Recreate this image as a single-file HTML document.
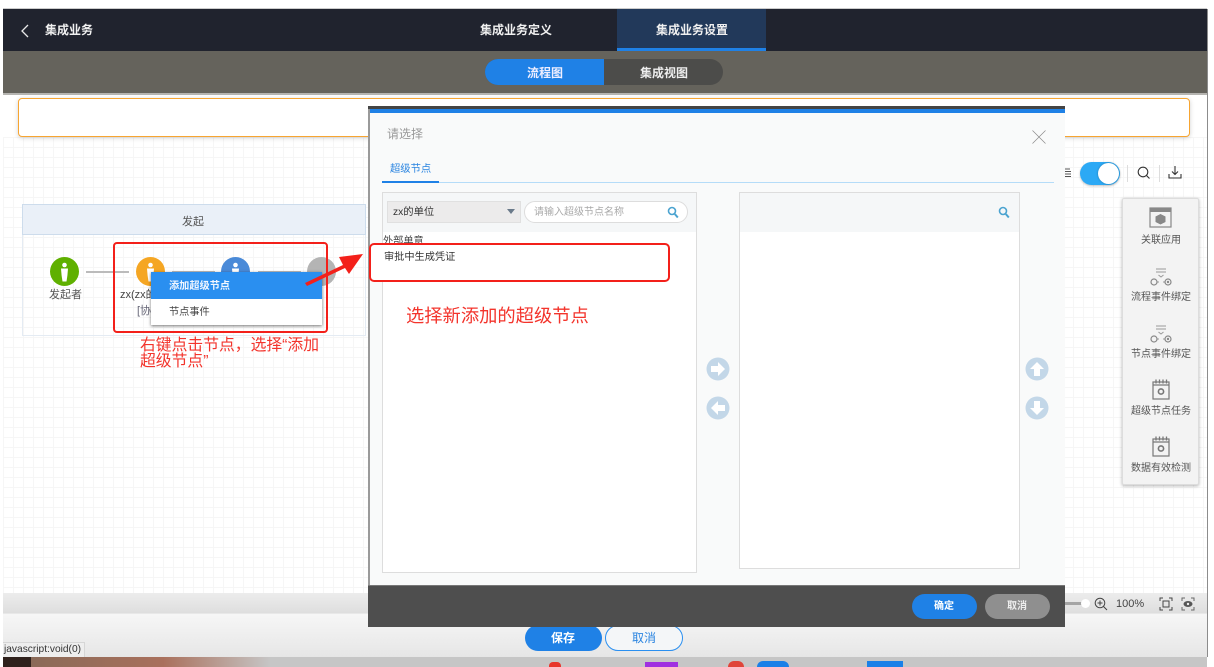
<!DOCTYPE html>
<html lang="zh">
<head>
<meta charset="utf-8">
<style>
html,body{margin:0;padding:0;width:1214px;height:667px;overflow:hidden;background:#fff;font-family:"Liberation Sans","Noto Sans CJK SC",sans-serif}
div,span,svg{position:absolute;box-sizing:border-box}
#p{left:0;top:0;width:1214px;height:667px;filter:blur(.3px);overflow:hidden}
.t{white-space:nowrap;line-height:1;text-align:center}
.tool{font-size:10px;color:#555;width:78px;left:1122px;text-align:center;line-height:12px;white-space:nowrap}
</style>
</head>
<body>
<div id="p">
<!-- page background -->
<div style="left:3px;top:8px;width:1204px;height:649px;background:#fff;border-top:1px solid #ccc"></div>
<!-- header -->
<div style="left:3px;top:9px;width:1204px;height:42px;background:#20232e"></div>
<svg style="left:19px;top:23px" width="12" height="16" viewBox="0 0 12 16"><path d="M9 2L3 8l6 6" fill="none" stroke="#e8e8e8" stroke-width="1.3"/></svg>
<div class="t" style="left:45px;top:24px;font-size:12px;font-weight:700;color:#f0f0f0">集成业务</div>
<div class="t" style="left:480px;top:24px;font-size:12px;font-weight:700;color:#f0f0f0">集成业务定义</div>
<div style="left:617px;top:9px;width:149px;height:42px;background:#22395a;border-bottom:3px solid #1f81e6"></div>
<div class="t" style="left:656px;top:24px;font-size:12px;font-weight:700;color:#f0f0f0">集成业务设置</div>
<!-- sub bar -->
<div style="left:3px;top:51px;width:1204px;height:42px;background:#65635c"></div>
<div style="left:3px;top:93px;width:1204px;height:2px;background:#b5b4b0"></div>
<div style="left:485px;top:59px;width:238px;height:26px;background:#4c4c4a;border-radius:13px"></div>
<div style="left:485px;top:59px;width:119px;height:26px;background:#1f81e6;border-radius:13px 0 0 13px"></div>
<div class="t" style="left:527px;top:67px;font-size:12px;font-weight:700;color:#eef">流程图</div>
<div class="t" style="left:640px;top:67px;font-size:12px;font-weight:700;color:#eee">集成视图</div>
<!-- canvas grid -->
<div style="left:3px;top:137px;width:1204px;height:456px;background-color:#fff;background-image:linear-gradient(#f6f6f6 1px,transparent 1px),linear-gradient(90deg,#f6f6f6 1px,transparent 1px);background-size:10px 10px"></div>
<!-- warning box -->
<div style="left:18px;top:98px;width:1172px;height:39px;background:#fff;border:1px solid #f7a531;border-radius:4px;box-shadow:0 1px 5px rgba(0,0,0,.18)"></div>
<!-- swimlane -->
<div style="left:22px;top:204px;width:344px;height:132px;border:1px solid #e4ebf3"></div>
<div style="left:22px;top:204px;width:344px;height:31px;background:#eaf0f8;border:1px solid #cddcec"></div>
<div class="t" style="left:182px;top:217px;font-size:11px;color:#555">发起</div>
<!-- nodes -->
<div style="left:86px;top:271px;width:43px;height:2px;background:#bbb"></div>
<div style="left:172px;top:271px;width:43px;height:2px;background:#bbb"></div>
<div style="left:258px;top:271px;width:43px;height:2px;background:#bbb"></div>
<div style="left:50px;top:257px;width:29px;height:29px;border-radius:50%;background:#5fb000"></div>
<svg style="left:50px;top:257px" width="29" height="29" viewBox="0 0 29 29"><circle cx="14.500" cy="8" r="2.300" fill="#fff"/><path d="M11 11.500h7l-.6 7-.9 6h-4l-.9-6z" fill="#fff"/></svg>
<div class="t" style="left:49px;top:290px;font-size:11px;color:#555">发起者</div>
<div style="left:136px;top:257px;width:29px;height:29px;border-radius:50%;background:#f5a623"></div>
<svg style="left:136px;top:257px" width="29" height="29" viewBox="0 0 29 29"><circle cx="14.500" cy="8" r="2.300" fill="#fff"/><path d="M11 11.500h7l-.6 7-.9 6h-4l-.9-6z" fill="#fff"/></svg>
<div style="left:221px;top:257px;width:29px;height:29px;border-radius:50%;background:#4a8ad8"></div>
<svg style="left:221px;top:257px" width="29" height="29" viewBox="0 0 29 29"><circle cx="14.500" cy="8" r="2.300" fill="#fff"/><path d="M11 11.500h7l-.6 7-.9 6h-4l-.9-6z" fill="#fff"/></svg>
<div style="left:307px;top:257px;width:29px;height:29px;border-radius:50%;background:#b4b4b4"></div>
<div class="t" style="left:120px;top:290px;font-size:11px;color:#444">zx(zx的</div>
<div class="t" style="left:137px;top:306px;font-size:11px;color:#667">[协</div>
<!-- context menu -->
<div style="left:151px;top:272px;width:171px;height:53px;background:#fff;box-shadow:0 1px 3px rgba(0,0,0,.55)"></div>
<div style="left:151px;top:272px;width:171px;height:27px;background:#2a8ff0"></div>
<div class="t" style="left:169px;top:281px;line-height:11px;font-size:10.200px;font-weight:700;color:#f0f6ff">添加超级节点</div>
<div class="t" style="left:169px;top:307px;line-height:11px;font-size:10.200px;color:#444">节点事件</div>
<!-- red annotation box left -->
<div style="left:113px;top:242px;width:215px;height:91px;border:2px solid #f3201a;border-radius:4px"></div>
<div style="left:140px;top:338px;width:190px;font-size:15.800px;line-height:15.500px;color:#f3342c;white-space:nowrap">右键点击节点，选择“添加<br>超级节点”</div>
<!-- toolbar behind -->
<svg style="left:1064px;top:168px" width="8" height="11" viewBox="0 0 8 11"><path d="M1 1h5M1 3.500h6M1 6h6M1 8.500h6" stroke="#555" stroke-width="1"/></svg>
<div style="left:1080px;top:162px;width:40px;height:23px;border-radius:12px;background:#2ca9f5;box-shadow:0 1px 2px rgba(0,0,0,.25)"></div>
<div style="left:1098px;top:163px;width:21px;height:21px;border-radius:50%;background:#fff;box-shadow:0 0 2px rgba(0,0,0,.3)"></div>
<div style="left:1127px;top:165px;width:1px;height:17px;background:#ddd"></div>
<div style="left:1159px;top:165px;width:1px;height:17px;background:#ddd"></div>
<svg style="left:1136px;top:165px" width="15" height="15" viewBox="0 0 15 15"><circle cx="7" cy="7" r="4.800" fill="none" stroke="#333" stroke-width="1.100"/><path d="M10.500 10.500l3 3" stroke="#333" stroke-width="1.100"/></svg>
<svg style="left:1168px;top:165px" width="14" height="15" viewBox="0 0 14 15"><path d="M7 1v8M4 6.500L7 9.500 10 6.500M1 9v4h12V9" fill="none" stroke="#333" stroke-width="1.100"/></svg>
<!-- right tool panel -->
<div style="left:1122px;top:198px;width:77px;height:287px;background:#f3f3f3;border:1px solid #ddd;box-shadow:0 1px 3px rgba(0,0,0,.3);border-radius:2px"></div>
<svg style="left:1149px;top:207px" width="24" height="21" viewBox="0 0 24 21"><rect x="1" y="1" width="21" height="19" fill="#f3f3f3" stroke="#888" stroke-width="1.200"/><rect x="1" y="1" width="21" height="4" fill="#888"/><path d="M11.500 7l5 2.500v5.500l-5 2.500-5-2.500V9.500z" fill="#888"/></svg>
<div class="tool" style="top:235px">关联应用</div>
<svg style="left:1150px;top:267px" width="22" height="20" viewBox="0 0 22 20"><path d="M6 2h10M6 5h10M8.500 8l2.500 2 2.500-2M7 15h2M13 15h2" fill="none" stroke="#999" stroke-width="1"/><circle cx="4" cy="15" r="3" fill="none" stroke="#888" stroke-width="1.200"/><circle cx="18" cy="15" r="3" fill="none" stroke="#888" stroke-width="1.200"/><circle cx="18" cy="15" r="1.200" fill="#888"/></svg>
<div class="tool" style="top:292px">流程事件绑定</div>
<svg style="left:1150px;top:324px" width="22" height="20" viewBox="0 0 22 20"><path d="M6 2h10M6 5h10M8.500 8l2.500 2 2.500-2M7 15h2M13 15h2" fill="none" stroke="#999" stroke-width="1"/><circle cx="4" cy="15" r="3" fill="none" stroke="#888" stroke-width="1.200"/><circle cx="18" cy="15" r="3" fill="none" stroke="#888" stroke-width="1.200"/><circle cx="18" cy="15" r="1.200" fill="#888"/></svg>
<div class="tool" style="top:349px">节点事件绑定</div>
<svg style="left:1151px;top:378px" width="20" height="22" viewBox="0 0 20 22"><rect x="2" y="4" width="16" height="17" fill="none" stroke="#777" stroke-width="1.200"/><path d="M2 7h16M5 1.500v4M8.500 1.500v4M12 1.500v4M15.500 1.500v4" stroke="#777" stroke-width="1.300" fill="none"/><circle cx="10" cy="13.500" r="2.600" fill="none" stroke="#777" stroke-width="1.600"/></svg>
<div class="tool" style="top:406px">超级节点任务</div>
<svg style="left:1151px;top:435px" width="20" height="22" viewBox="0 0 20 22"><rect x="2" y="4" width="16" height="17" fill="none" stroke="#777" stroke-width="1.200"/><path d="M2 7h16M5 1.500v4M8.500 1.500v4M12 1.500v4M15.500 1.500v4" stroke="#777" stroke-width="1.300" fill="none"/><circle cx="10" cy="13.500" r="2.600" fill="none" stroke="#777" stroke-width="1.600"/></svg>
<div class="tool" style="top:463px">数据有效检测</div>
<!-- bottom bars -->
<div style="left:3px;top:593px;width:1204px;height:21px;background:linear-gradient(#ececec,#dedede);border-bottom:1px solid #e8e8e8"></div>
<div style="left:3px;top:614px;width:1204px;height:43px;background:linear-gradient(#f6f6f6,#e6e6e6)"></div>
<div style="left:1065px;top:602px;width:21px;height:3px;background:#a5a5a5"></div>
<div style="left:1081px;top:599px;width:9px;height:9px;border-radius:50%;background:#fff"></div>
<svg style="left:1094px;top:597px" width="14" height="14" viewBox="0 0 14 14"><circle cx="6" cy="6" r="4.800" fill="none" stroke="#444" stroke-width="1"/><path d="M9.500 9.500l3.500 3.500M6 3.500v5M3.500 6h5" stroke="#444" stroke-width="1"/></svg>
<div class="t" style="left:1116px;top:599px;font-size:11px;color:#444">100%</div>
<svg style="left:1159px;top:597px" width="14" height="14" viewBox="0 0 14 14"><path d="M1 4V1h3M10 1h3v3M13 10v3h-3M4 13H1v-3" fill="none" stroke="#444" stroke-width="1"/><rect x="4" y="4" width="6" height="6" fill="none" stroke="#444" stroke-width="1"/></svg>
<svg style="left:1181px;top:597px" width="14" height="14" viewBox="0 0 14 14"><path d="M1 4V1h3M10 1h3v3M13 10v3h-3M4 13H1v-3" fill="none" stroke="#666" stroke-width="1"/><ellipse cx="7" cy="7" rx="4.500" ry="3" fill="#555"/><circle cx="7" cy="7" r="1.200" fill="#eee"/></svg>
<div style="left:525px;top:625px;width:77px;height:26px;background:#1f81e6;border-radius:13px"></div>
<div class="t" style="left:551px;top:632px;font-size:12px;font-weight:700;color:#fff">保存</div>
<div style="left:605px;top:625px;width:78px;height:26px;background:#f4f6f8;border:1px solid #2a8ff0;border-radius:13px"></div>
<div class="t" style="left:632px;top:632px;font-size:12px;color:#2a84e0">取消</div>
<div style="left:3px;top:642px;width:82px;height:15px;background:#eee;border:1px solid #d6d6d6;border-left:0;border-bottom:0"></div>
<div class="t" style="left:4px;top:644px;font-size:10.200px;color:#333;line-height:12px">javascript:void(0)</div>
<!-- dialog -->
<div style="left:368px;top:106px;width:697px;height:521px;background:#f9fafa;border-left:2px solid #9a9a9a"></div>
<div style="left:368px;top:106px;width:697px;height:3px;background:#444"></div>
<div style="left:370px;top:109px;width:695px;height:4px;background:#1f81e6"></div>
<div class="t" style="left:387px;top:128px;font-size:12px;color:#999">请选择</div>
<svg style="left:1031px;top:129px" width="16" height="16" viewBox="0 0 16 16"><path d="M1.500 1.500l13 13M14.500 1.500l-13 13" stroke="#888" stroke-width="0.700"/></svg>
<div class="t" style="left:390px;top:164px;line-height:11px;font-size:10.300px;color:#2a84e0">超级节点</div>
<div style="left:382px;top:182px;width:672px;height:1px;background:#b5dcf8"></div>
<div style="left:382px;top:181px;width:57px;height:2px;background:#1f81e6"></div>
<!-- left list -->
<div style="left:382px;top:192px;width:315px;height:381px;background:#fff;border:1px solid #ddd"></div>
<div style="left:383px;top:193px;width:313px;height:39px;background:#f5f7f8"></div>
<div style="left:387px;top:201px;width:134px;height:22px;background:#ecebeb;border:1px solid #e0e0e0"></div>
<div class="t" style="left:393px;top:207px;font-size:10.300px;color:#333;line-height:12px">zx的单位</div>
<svg style="left:506px;top:209px" width="10" height="6" viewBox="0 0 10 6"><path d="M1 0h8L5 5z" fill="#6a7a8a"/></svg>
<div style="left:524px;top:201px;width:164px;height:22px;background:#fff;border:1px solid #ddd;border-radius:11px"></div>
<div class="t" style="left:534px;top:207px;line-height:11px;font-size:10px;color:#aaa">请输入超级节点名称</div>
<svg style="left:667px;top:206px" width="12" height="13" viewBox="0 0 12 13"><circle cx="5" cy="5" r="3.500" fill="none" stroke="#4aa3d0" stroke-width="1.600"/><path d="M7.800 8l3 3.500" stroke="#4aa3d0" stroke-width="2"/></svg>
<div class="t" style="left:383px;top:237px;font-size:10.200px;color:#444">外部单意</div>
<div style="left:370px;top:244px;width:300px;height:38px;background:#fff"></div>
<div class="t" style="left:384px;top:252px;line-height:11px;font-size:10.200px;color:#333">审批中生成凭证</div>
<!-- right list -->
<div style="left:739px;top:192px;width:281px;height:377px;background:#fff;border:1px solid #ddd"></div>
<div style="left:740px;top:193px;width:279px;height:39px;background:#f5f7f8"></div>
<svg style="left:998px;top:206px" width="12" height="13" viewBox="0 0 12 13"><circle cx="5" cy="5" r="3.500" fill="none" stroke="#4aa3d0" stroke-width="1.600"/><path d="M7.800 8l3 3.500" stroke="#4aa3d0" stroke-width="2"/></svg>
<!-- arrows -->
<svg style="left:706px;top:357px" width="24" height="24" viewBox="0 0 24 24"><circle cx="12" cy="12" r="11.500" fill="#c3d7e8"/><path d="M5 9h7V5l7 7-7 7v-4H5z" fill="#fff"/></svg>
<svg style="left:706px;top:396px" width="24" height="24" viewBox="0 0 24 24"><circle cx="12" cy="12" r="11.500" fill="#c3d7e8"/><path d="M19 9h-7V5l-7 7 7 7v-4h7z" fill="#fff"/></svg>
<svg style="left:1025px;top:357px" width="24" height="24" viewBox="0 0 24 24"><circle cx="12" cy="12" r="11.500" fill="#c3d7e8"/><path d="M9 19v-7H5l7-7 7 7h-4v7z" fill="#fff"/></svg>
<svg style="left:1025px;top:396px" width="24" height="24" viewBox="0 0 24 24"><circle cx="12" cy="12" r="11.500" fill="#c3d7e8"/><path d="M9 5v7H5l7 7 7-7h-4V5z" fill="#fff"/></svg>
<!-- red annotation right -->
<div style="left:369px;top:243px;width:301px;height:39px;border:2px solid #f3201a;border-radius:5px"></div>
<div class="t" style="left:406px;top:307px;font-size:18.300px;color:#f3342c">选择新添加的超级节点</div>
<svg style="left:299px;top:248px" width="68" height="40" viewBox="0 0 68 40"><path d="M6 35L44 17l-4-8 24-3-14 20-4-6L8 38z" fill="#f3201a"/></svg>
<!-- dialog footer -->
<div style="left:368px;top:585px;width:697px;height:42px;background:#4e4e4e;border-top:1px solid #777"></div>
<div style="left:912px;top:594px;width:65px;height:25px;background:#1f81e6;border-radius:13px"></div>
<div class="t" style="left:934px;top:601px;line-height:11px;font-size:10px;font-weight:700;color:#fff">确定</div>
<div style="left:985px;top:594px;width:65px;height:25px;background:#8f8f8f;border-radius:13px"></div>
<div class="t" style="left:1007px;top:601px;line-height:11px;font-size:10px;font-weight:700;color:#eee">取消</div>
<!-- desktop strip -->
<div style="left:3px;top:657px;width:1204px;height:10px;background:#c6c6c6"></div>
<div style="left:3px;top:657px;width:28px;height:10px;background:#2f211c"></div>
<div style="left:31px;top:657px;width:240px;height:10px;background:linear-gradient(90deg,#8a6a58,#a9705c 55%,#c6c6c6)"></div>
<div style="left:549px;top:662px;width:12px;height:5px;background:#e8352b;border-radius:4px 4px 0 0"></div>
<div style="left:645px;top:662px;width:33px;height:5px;background:#a030e0"></div>
<div style="left:728px;top:661px;width:16px;height:6px;background:#e0453a;border-radius:10px 10px 0 0"></div>
<div style="left:757px;top:661px;width:32px;height:6px;background:#1a80e8;border-radius:6px 6px 0 0"></div>
<div style="left:867px;top:661px;width:36px;height:6px;background:#1a80e8"></div>
<div style="left:1207px;top:0;width:7px;height:667px;background:#fff"></div>
<div style="left:1207px;top:9px;width:1px;height:648px;background:#8c8c8c"></div>
</div>
</body>
</html>
